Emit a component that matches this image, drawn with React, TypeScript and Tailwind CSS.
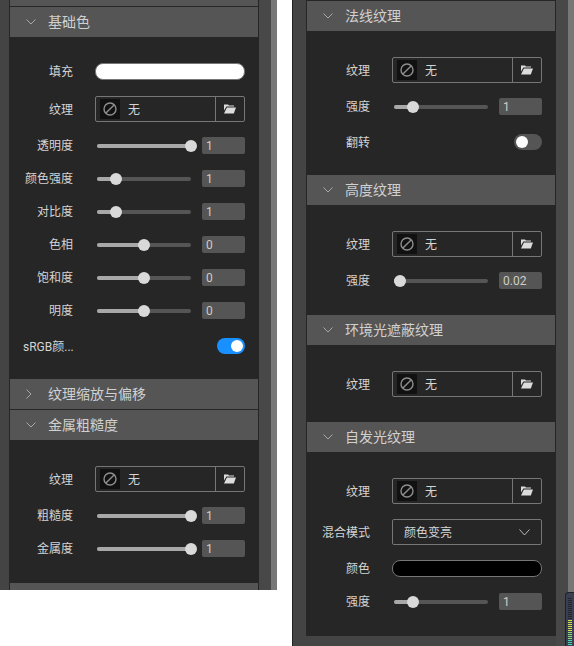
import React from 'react';

const meterBars = [
  ...Array(11).fill('bg-[#23262f]'),
  ...Array(6).fill('bg-[#d6e04a]'),
  ...Array(4).fill('bg-[#8fe07a]'),
  ...Array(3).fill('bg-[#43d9b0]'),
];

function Chevron({ open }: { open: boolean }) {
  return open ? (
    <svg width="10" height="6" viewBox="0 0 10 6" fill="none" stroke="#a8a8a8" strokeWidth="1">
      <path d="M0.5 0.5 L5 5 L9.5 0.5" />
    </svg>
  ) : (
    <svg width="6" height="10" viewBox="0 0 6 10" fill="none" stroke="#a8a8a8" strokeWidth="1">
      <path d="M0.5 0.5 L5 5 L0.5 9.5" />
    </svg>
  );
}

function SectionHeader({ title, open = true }: { title: string; open?: boolean }) {
  return (
    <div className="mx-px flex h-[30px] items-center bg-[#555555] text-[14px] leading-[30px] text-[#d0d0d0]">
      <div className="flex w-[38px] shrink-0 justify-start pl-[16px]">
        <Chevron open={open} />
      </div>
      <span>{title}</span>
    </div>
  );
}

function Row({ label, className = '', children }: { label: string; className?: string; children: React.ReactNode }) {
  return (
    <div className={`flex items-center ${className}`}>
      <div className="mr-[22px] h-[17px] w-[64px] shrink-0 whitespace-nowrap pl-[14px] text-right text-[12px] leading-[19px] text-[#d4d4d4]">{label}</div>
      <div className="w-[150px]">{children}</div>
    </div>
  );
}

function FolderIcon() {
  return (
    <svg width="12" height="10" viewBox="0 0 12 10" fill="#dcdcdc">
      <path d="M0 0.5 H4 L5 1.5 H10 V2.6 H2.4 L0 6.5 Z" />
      <path d="M2.9 3.5 H12 L9.8 9.5 H0 Z" />
    </svg>
  );
}

function TextureRow({ className = '' }: { className?: string }) {
  return (
    <Row label="纹理" className={className}>
      <div className="flex h-[26px] items-center rounded-[2px] border border-[#767676]">
        <div className="ml-1 flex h-5 w-5 shrink-0 items-center justify-center bg-[#111111]">
          <svg width="14" height="14" viewBox="0 0 14 14" fill="none" stroke="#8e8e8e" strokeWidth="1.4">
            <circle cx="7" cy="7" r="6" />
            <path d="M2.9 11.1 L11.1 2.9" />
          </svg>
        </div>
        <span className="ml-2 flex-1 pt-[2px] text-[12px] text-[#d4d4d4]">无</span>
        <div className="flex h-full w-[29px] shrink-0 items-center justify-center border-l border-[#767676]">
          <FolderIcon />
        </div>
      </div>
    </Row>
  );
}

function SliderRow({ label, percent, value, className = '' }: { label: string; percent: number; value: string; className?: string }) {
  return (
    <Row label={label} className={className}>
      <div className="flex h-[17px] items-center">
        <div className="relative ml-[2px] h-[4px] w-[94px] rounded-full bg-[#555555]">
          <div className="h-full rounded-full bg-[#a8a8a8]" style={{ width: `${percent}%` }} />
          <div
            className="absolute top-[-4px] h-3 w-3 -translate-x-1/2 rounded-full bg-[#d9d9d9]"
            style={{ left: percent < 6 ? '6px' : `${percent}%` }}
          />
        </div>
        <div className="ml-[11px] h-[17px] w-[43px] rounded-[2px] bg-[#555555] pl-1 text-[12px] leading-[19px] text-[#d0cdc4]">{value}</div>
      </div>
    </Row>
  );
}

function SwitchRow({ label, on }: { label: string; on: boolean }) {
  return (
    <Row label={label} className="mt-[3px] h-4">
      <div className="flex justify-end">
        <div className={`flex h-4 w-7 items-center rounded-full px-[2px] ${on ? 'justify-end bg-[#1890ff]' : 'justify-start bg-[#555555]'}`}>
          <div className="h-3 w-3 rounded-full bg-white" />
        </div>
      </div>
    </Row>
  );
}

function Swatch({ label, color, className = '' }: { label: string; color: string; className?: string }) {
  return (
    <Row label={label} className={className}>
      <div className={`h-[17px] rounded-lg border border-[#767676] ${color}`} />
    </Row>
  );
}

export default function App() {
  return (
    <div
      className="relative flex h-[646px] w-[574px] overflow-hidden bg-white"
      style={{ fontFamily: 'Roboto, "Noto Sans CJK SC", sans-serif' }}
    >
      {/* left panel */}
      <div className="flex h-[590px] w-[277px] shrink-0 overflow-hidden bg-[#444444]">
        <div className="w-[9px] shrink-0" />
        <div className="w-[250px] shrink-0 bg-[#262626]">
          <div className="mx-px mb-px h-[6px] bg-[#555555]" />
          <SectionHeader title="基础色" />
          <div className="flex flex-col gap-[16px] pb-[25px] pt-[26px]">
            <Swatch label="填充" color="bg-white" />
            <TextureRow />
            <SliderRow label="透明度" percent={100} value="1" className="-mt-px" />
            <SliderRow label="颜色强度" percent={20} value="1" />
            <SliderRow label="对比度" percent={20} value="1" />
            <SliderRow label="色相" percent={50} value="0" />
            <SliderRow label="饱和度" percent={50} value="0" />
            <SliderRow label="明度" percent={50} value="0" />
            <SwitchRow label="sRGB颜..." on />
          </div>
          <SectionHeader title="纹理缩放与偏移" open={false} />
          <div className="h-px" />
          <SectionHeader title="金属粗糙度" />
          <div className="flex flex-col gap-[16px] pb-[26px] pt-[26px]">
            <TextureRow />
            <SliderRow label="粗糙度" percent={100} value="1" className="-mt-px" />
            <SliderRow label="金属度" percent={100} value="1" />
          </div>
          <div className="mx-px h-[7px] bg-[#555555]" />
        </div>
        <div className="w-3 shrink-0 bg-[#484848]" />
        <div className="w-[6px] shrink-0 bg-[#777777]" />
      </div>

      {/* right panel */}
      <div className="ml-[15px] flex h-[646px] w-[282px] shrink-0 overflow-hidden border-l border-[#222222] bg-[#444444]">
        <div className="w-[13px] shrink-0" />
        <div className="h-[636px] w-[250px] shrink-0 bg-[#262626]">
          <div className="h-px" />
          <SectionHeader title="法线纹理" />
          <div className="flex flex-col gap-[16px] pb-[25px] pt-[26px]">
            <TextureRow />
            <SliderRow label="强度" percent={20} value="1" className="-mt-px" />
            <SwitchRow label="翻转" on={false} />
          </div>
          <SectionHeader title="高度纹理" />
          <div className="flex flex-col gap-[16px] pb-[26px] pt-[26px]">
            <TextureRow />
            <SliderRow label="强度" percent={2} value="0.02" className="-mt-px" />
          </div>
          <SectionHeader title="环境光遮蔽纹理" />
          <div className="flex flex-col pb-[25px] pt-[26px]">
            <TextureRow />
          </div>
          <SectionHeader title="自发光纹理" />
          <div className="flex flex-col gap-[16px] pb-[26px] pt-[26px]">
            <TextureRow />
            <Row label="混合模式" className="-mt-px">
              <div className="flex h-[26px] items-center justify-between rounded-[2px] border border-[#767676] px-[11px] text-[12px] text-[#d4d4d4]">
                <span className="pt-[2px]">颜色变亮</span>
                <svg width="11" height="7" viewBox="0 0 11 7" fill="none" stroke="#b8b8b8" strokeWidth="1">
                  <path d="M0.5 0.5 L5.5 6 L10.5 0.5" />
                </svg>
              </div>
            </Row>
            <Swatch label="颜色" color="bg-black" className="-mt-px" />
            <SliderRow label="强度" percent={20} value="1" />
          </div>
        </div>
        <div className="w-3 shrink-0 bg-[#484848]" />
        <div className="w-[6px] shrink-0 bg-[#777777]" />
      </div>

      {/* level meter sitting over the scrollbar corner */}
      <div className="absolute left-[565px] top-[592px] flex h-[54px] w-[9px] flex-col gap-px rounded-tl-sm border-l border-t border-[#1f2129] bg-[#3a4052] pl-[2px] pt-[5px]">
        {meterBars.map((color, i) => (
          <div key={i} className={`h-px w-[4px] shrink-0 ${color}`} />
        ))}
      </div>
    </div>
  );
}
